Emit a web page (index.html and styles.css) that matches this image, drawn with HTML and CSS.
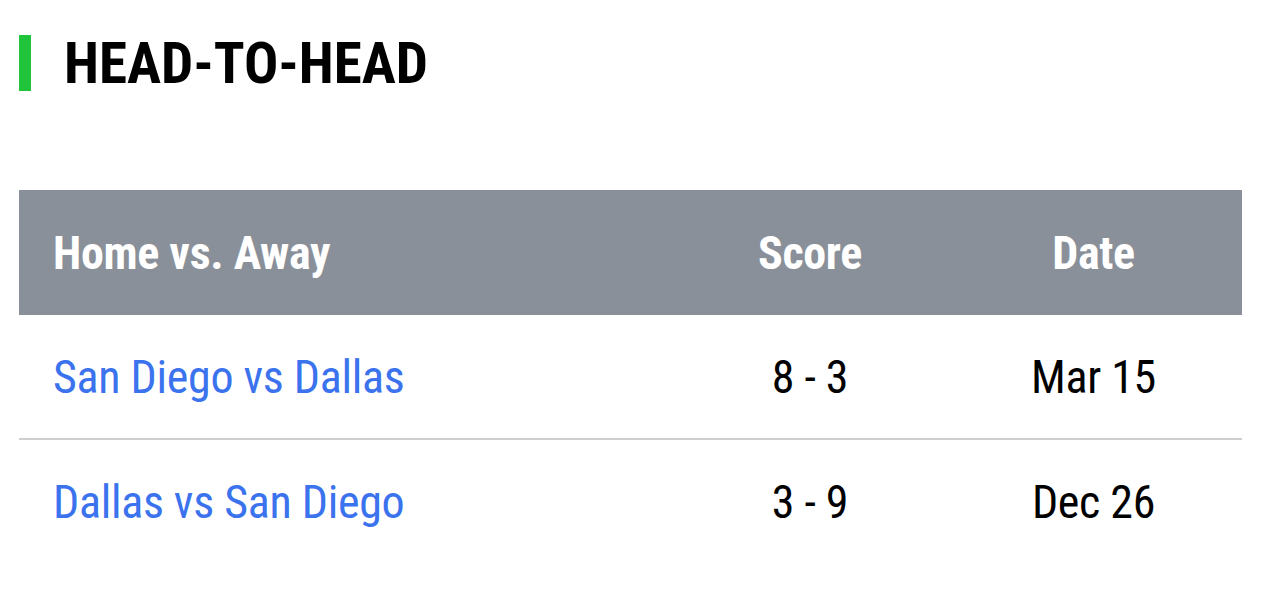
FILE: index.html
```html
<!DOCTYPE html>
<html>
<head>
<meta charset="utf-8">
<link rel="stylesheet" href="styles.css">
</head>
<body>
<section class="h2h">
  <h2 class="h2h-title">HEAD-TO-HEAD</h2>
  <div class="h2h-table">
    <div class="h2h-row h2h-head">
      <div class="c-match">Home vs. Away</div>
      <div class="c-score">Score</div>
      <div class="c-date">Date</div>
    </div>
    <div class="h2h-row h2h-sep">
      <div class="c-match"><a href="#" class="match-link">San Diego vs Dallas</a></div>
      <div class="c-score">8 - 3</div>
      <div class="c-date">Mar 15</div>
    </div>
    <div class="h2h-row">
      <div class="c-match"><a href="#" class="match-link">Dallas vs San Diego</a></div>
      <div class="c-score">3 - 9</div>
      <div class="c-date">Dec 26</div>
    </div>
  </div>
</section>
</body>
</html>
```
FILE: styles.css
```css
html, body {
  margin: 0;
  padding: 0;
  background: #ffffff;
}
body {
  font-family: Roboto, "Liberation Sans", sans-serif;
  font-stretch: 75%;
  color: #000;
}
.h2h {
  padding: 35px 38px 0 19px;
}
.h2h-title {
  margin: 0;
  height: 56px;
  display: flex;
  align-items: center;
  border-left: 12px solid #1fc43a;
  padding-left: 33px;
  font-size: 57px;
  font-weight: 700;
  line-height: 1;
  letter-spacing: 0;
}
.h2h-table {
  margin-top: 99px;
}
.h2h-row {
  display: grid;
  grid-template-columns: 656px 270px 1fr;
  align-items: center;
  height: 123px;
  font-size: 46px;
  letter-spacing: -0.3px;
}
.h2h-head {
  height: 125px;
  background: #8a9099;
  color: #ffffff;
  font-weight: 700;
}
.h2h-sep {
  border-bottom: 2px solid #cfcfcf;
}
.c-match {
  padding-left: 34px;
}
.c-score, .c-date {
  text-align: center;
}
.match-link {
  color: #3b72ee;
  text-decoration: none;
}
```
